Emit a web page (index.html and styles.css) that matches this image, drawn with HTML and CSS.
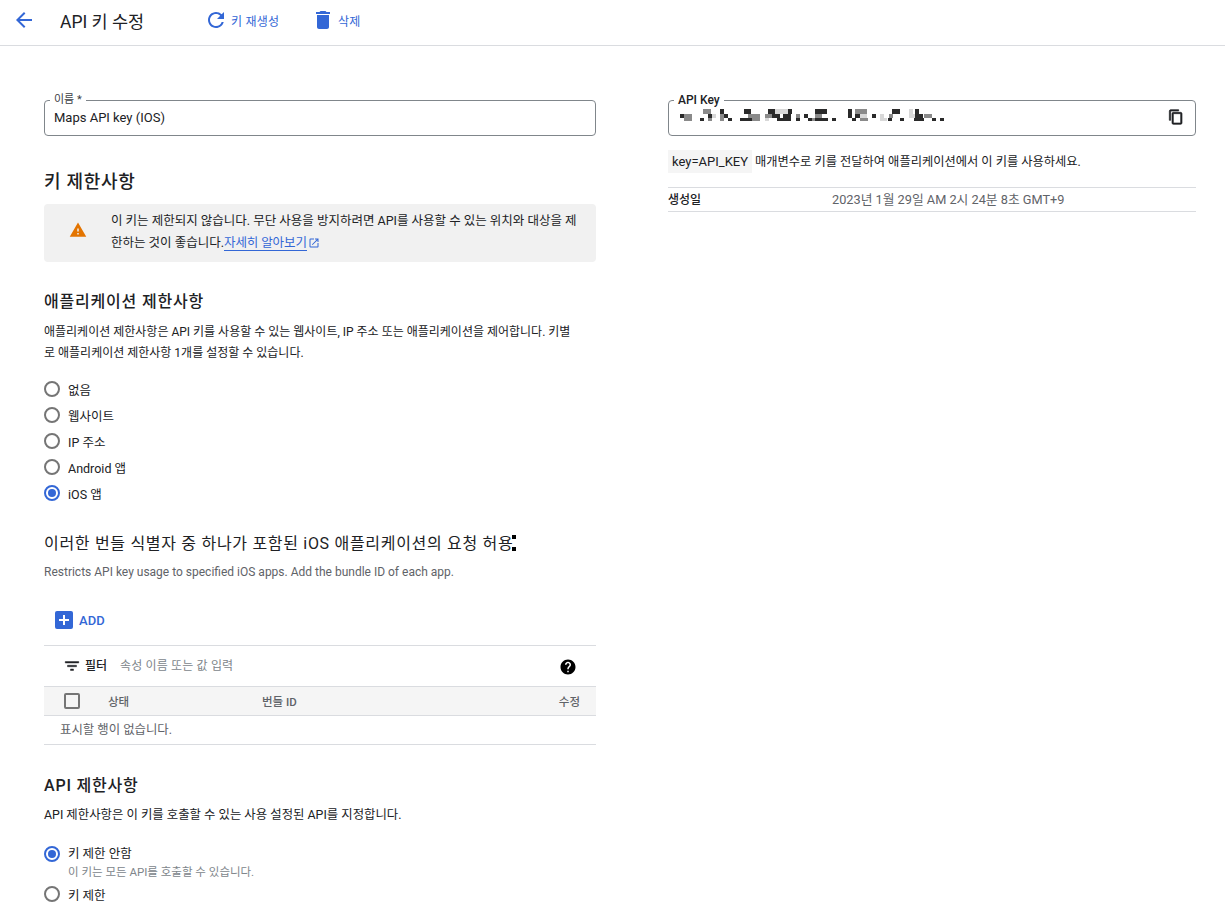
FILE: index.html
```html
<!DOCTYPE html>
<html lang="ko">
<head>
<meta charset="utf-8">
<title>API 키 수정</title>
<link rel="stylesheet" href="styles.css">
</head>
<body>
<header class="toolbar">
  <svg class="back" viewBox="0 0 24 24" width="24" height="24"><path d="M20 11H7.83l5.59-5.59L12 4l-8 8 8 8 1.41-1.41L7.83 13H20z"/></svg>
  <h1 class="page-title">API 키 수정</h1>
  <span class="tool tool-regen">
    <svg viewBox="0 0 24 24" width="24" height="24"><path d="M17.65 6.35A7.958 7.958 0 0 0 12 4c-4.42 0-7.99 3.58-7.99 8s3.57 8 7.99 8c3.73 0 6.84-2.55 7.73-6h-2.08A5.99 5.99 0 0 1 12 18c-3.31 0-6-2.69-6-6s2.69-6 6-6c1.66 0 3.14.69 4.22 1.78L13 11h7V4l-2.35 2.35z"/></svg>
    키 재생성
  </span>
  <span class="tool tool-del">
    <svg viewBox="0 0 24 24" width="24" height="24"><path d="M6 19c0 1.1.9 2 2 2h8c1.1 0 2-.9 2-2V7H6v12zM19 4h-3.5l-1-1h-5l-1 1H5v2h14V4z"/></svg>
    삭제
  </span>
</header>

<main class="columns">
  <section class="col-left">
    <div class="field">
      <span class="field-label">이름 *</span>
      <span class="field-value">Maps API key (IOS)</span>
    </div>

    <h2 class="h-key">키 제한사항</h2>
    <div class="notice">
      <svg class="warn" viewBox="0 0 24 24" width="18" height="18"><path d="M1 21h22L12 2 1 21zm12-3h-2v-2h2v2zm0-4h-2v-4h2v4z"/></svg>
      <p>이 키는 제한되지 않습니다. 무단 사용을 방지하려면 API를 사용할 수 있는 위치와 대상을 제한하는 것이 좋습니다.<a class="link">자세히 알아보기</a><svg class="ext" viewBox="0 0 24 24" width="12" height="12"><path d="M19 19H5V5h7V3H5a2 2 0 0 0-2 2v14a2 2 0 0 0 2 2h14c1.1 0 2-.9 2-2v-7h-2v7zM14 3v2h3.59l-9.83 9.83 1.41 1.41L19 6.41V10h2V3h-7z"/></svg></p>
    </div>

    <h2 class="h-app">애플리케이션 제한사항</h2>
    <p class="desc">애플리케이션 제한사항은 API 키를 사용할 수 있는 웹사이트, IP 주소 또는 애플리케이션을 제어합니다. 키별로 애플리케이션 제한사항 1개를 설정할 수 있습니다.</p>

    <ul class="radios">
      <li class="radio"><i class="dot"></i>없음</li>
      <li class="radio"><i class="dot"></i>웹사이트</li>
      <li class="radio"><i class="dot"></i>IP 주소</li>
      <li class="radio"><i class="dot"></i>Android 앱</li>
      <li class="radio"><i class="dot on"></i>iOS 앱</li>
    </ul>

    <h2 class="h-bundle"><span class="h-bundle-text">이러한 번들 식별자 중 하나가 포함된 iOS 애플리케이션의 요청 허용<i class="caret"></i></span></h2>
    <p class="hint">Restricts API key usage to specified iOS apps. Add the bundle ID of each app.</p>

    <div class="add">
      <svg viewBox="0 0 18 18" width="18" height="18"><rect width="18" height="18" rx="2" class="add-bg"/><path class="add-plus" d="M8 4h2v4h4v2h-4v4H8v-4H4V8h4z"/></svg>
      ADD
    </div>

    <div class="filter">
      <svg class="filter-ic" viewBox="0 0 24 24" width="18" height="18"><path d="M10 18h4v-2h-4v2zM3 6v2h18V6H3zm3 7h12v-2H6v2z"/></svg>
      <span class="filter-name">필터</span>
      <span class="filter-ph">속성 이름 또는 값 입력</span>
      <svg class="help" viewBox="0 0 24 24" width="18" height="18"><path d="M12 2C6.48 2 2 6.48 2 12s4.48 10 10 10 10-4.48 10-10S17.52 2 12 2zm1 17h-2v-2h2v2zm2.07-7.75-.9.92C13.45 12.9 13 13.5 13 15h-2v-.5c0-1.1.45-2.1 1.17-2.83l1.24-1.26c.37-.36.59-.86.59-1.41 0-1.1-.9-2-2-2s-2 .9-2 2H8c0-2.21 1.79-4 4-4s4 1.79 4 4c0 .88-.36 1.68-.93 2.25z"/></svg>
    </div>
    <div class="thead">
      <i class="check"></i>
      <span class="th-state">상태</span>
      <span class="th-id">번들 ID</span>
      <span class="th-edit">수정</span>
    </div>
    <div class="empty">표시할 행이 없습니다.</div>

    <h2 class="h-api">API 제한사항</h2>
    <p class="desc-api">API 제한사항은 이 키를 호출할 수 있는 사용 설정된 API를 지정합니다.</p>

    <div class="radio radio-api"><i class="dot on"></i><span>키 제한 안함<small>이 키는 모든 API를 호출할 수 있습니다.</small></span></div>
    <div class="radio radio-api2"><i class="dot"></i>키 제한</div>
  </section>

  <aside class="col-right">
    <div class="field field-key">
      <span class="field-label label-key">API Key</span>
      <svg class="mosaic" viewBox="0 0 270 12" width="270" height="12">
        <g class="m-d">
          <rect x="40" y="0" width="4" height="5"/><rect x="64" y="0" width="7" height="5"/><rect x="88" y="0" width="7" height="5"/><rect x="108" y="0" width="4" height="5"/>
          <rect x="135" y="0" width="12" height="5"/><rect x="168" y="0" width="4" height="5"/><rect x="212" y="0" width="8" height="5"/><rect x="235" y="0" width="4" height="5"/>
          <rect x="0" y="5" width="4" height="4"/><rect x="28" y="5" width="4" height="4"/><rect x="44" y="5" width="4" height="4"/><rect x="92" y="5" width="8" height="4"/><rect x="103" y="5" width="8" height="4"/><rect x="124" y="5" width="4" height="4"/>
          <rect x="168" y="5" width="4" height="4"/><rect x="175" y="5" width="5" height="4"/><rect x="192" y="5" width="4" height="4"/><rect x="235" y="5" width="8" height="4"/>
          <rect x="20" y="9" width="4" height="3"/><rect x="48" y="9" width="4" height="3"/><rect x="60" y="9" width="12" height="3"/><rect x="97" y="9" width="14" height="3"/><rect x="116" y="9" width="4" height="3"/><rect x="128" y="9" width="4" height="3"/>
          <rect x="135" y="9" width="13" height="3"/><rect x="152" y="9" width="4" height="3"/><rect x="172" y="9" width="4" height="3"/><rect x="208" y="9" width="4" height="3"/><rect x="220" y="9" width="4" height="3"/><rect x="234" y="9" width="10" height="3"/><rect x="252" y="9" width="4" height="3"/><rect x="260" y="9" width="4" height="3"/>
        </g>
        <g class="m-g">
          <rect x="23" y="0" width="8" height="5"/><rect x="175" y="0" width="12" height="5"/>
          <rect x="4" y="5" width="8" height="7"/><rect x="40" y="5" width="4" height="7"/><rect x="68" y="5" width="12" height="4"/><rect x="85" y="5" width="7" height="4"/><rect x="116" y="5" width="4" height="4"/>
          <rect x="135" y="5" width="7" height="4"/><rect x="209" y="5" width="4" height="4"/><rect x="244" y="5" width="8" height="4"/>
          <rect x="28" y="9" width="4" height="3"/><rect x="72" y="9" width="8" height="3"/><rect x="132" y="9" width="3" height="3"/><rect x="180" y="9" width="8" height="3"/>
        </g>
        <g class="m-l">
          <rect x="95" y="0" width="13" height="5"/><rect x="229" y="0" width="4" height="5"/>
          <rect x="32" y="5" width="4" height="4"/><rect x="180" y="5" width="7" height="4"/><rect x="200" y="5" width="4" height="4"/><rect x="229" y="5" width="6" height="4"/>
          <rect x="85" y="9" width="4" height="3"/><rect x="200" y="9" width="7" height="3"/>
        </g>
      </svg>
      <svg class="copy" viewBox="0 0 24 24" width="16" height="16"><path d="M16 1H4c-1.1 0-2 .9-2 2v14h2V3h12V1zm3 4H8c-1.1 0-2 .9-2 2v14c0 1.1.9 2 2 2h11c1.1 0 2-.9 2-2V7c0-1.1-.9-2-2-2zm0 16H8V7h11v14z"/></svg>
    </div>
    <p class="key-note"><code class="key-code">key=API_KEY</code> 매개변수로 키를 전달하여 애플리케이션에서 이 키를 사용하세요.</p>
    <div class="meta"><span class="meta-k">생성일</span><span class="meta-v">2023년 1월 29일 AM 2시 24분 8초 GMT+9</span></div>
  </aside>
</main>
</body>
</html>
```

FILE: styles.css
```css
* { box-sizing: border-box; }
html, body { margin: 0; padding: 0; }
body {
  font-family: Roboto, "Noto Sans CJK KR", sans-serif;
  font-size: 12px;
  color: #202124;
  background: #fff;
  height: 922px;
  overflow: hidden;
}
h1, h2, p, ul { margin: 0; padding: 0; }
i { display: block; font-style: normal; }

/* toolbar */
.toolbar {
  height: 46px;
  border-bottom: 1px solid #dadce0;
  display: flex;
  align-items: center;
  padding-bottom: 5px;
}
.back { fill: #3367d6; margin-left: 12px; }
.page-title { font-size: 17.5px; font-weight: 400; margin-left: 24px; width: 144px; white-space: nowrap; }
.tool { display: flex; align-items: center; color: #3367d6; font-size: 12px; font-weight: 400; letter-spacing: .25px; }
.tool svg { fill: #3367d6; flex: none; }
.tool-regen { width: 107px; }
.tool-regen svg { margin-right: 3px; }
.tool-del svg { margin-right: 3px; }

/* columns */
.columns { display: flex; gap: 72px; padding: 54px 0 0 44px; }
.col-left { width: 552px; flex: none; }
.col-right { width: 528px; flex: none; }

/* outlined field */
.field {
  position: relative;
  height: 36px;
  border: 1px solid #80868b;
  border-radius: 4px;
  display: flex;
  align-items: center;
  padding: 0 0 2px 9px;
  font-size: 13px;
}
.field-label {
  position: absolute;
  top: -7px;
  left: 5px;
  padding: 0 4px;
  background: #fff;
  font-size: 11px;
  line-height: 12px;
  color: #3c4043;
}
.field-value { color: #202124; }

/* headings */
.h-key { font-size: 18px; font-weight: 500; line-height: 24px; margin-top: 34px; letter-spacing: .7px; }
.h-app { font-size: 16px; font-weight: 500; line-height: 24px; margin-top: 28px; letter-spacing: .8px; }
.h-bundle { font-size: 16px; font-weight: 400; line-height: 24px; margin-top: 26px; letter-spacing: .7px; white-space: nowrap; }
.h-bundle-text { display: inline-block; position: relative; }
.caret { position: absolute; right: -3px; top: 3px; width: 4px; height: 4px; background: #000; }
.caret::after { content: ""; position: absolute; left: 0; top: 12px; width: 4px; height: 4px; background: #000; }
.h-api { font-size: 16px; font-weight: 500; line-height: 24px; margin-top: 29px; letter-spacing: .8px; }

/* notice */
.notice {
  display: flex;
  background: #f1f1f1;
  border-radius: 4px;
  height: 58px;
  margin-top: 10px;
  padding: 6px 14px 0 25px;
}
.warn { fill: #e37400; flex: none; margin-top: 11px; }
.notice p { margin-left: 24px; font-size: 12.5px; line-height: 22px; color: #202124; }
.link { color: #3367d6; border-bottom: 1px solid #3367d6; letter-spacing: -.1px; }
.ext { fill: #3367d6; vertical-align: -2px; margin-left: 1px; }

.desc { font-size: 12px; line-height: 21px; margin-top: 8px; padding-right: 20px; color: #202124; }

/* radios */
.radios { list-style: none; margin-top: 12px; }
.radio { display: flex; align-items: center; height: 26px; font-size: 12.5px; color: #202124; }
.dot {
  width: 16px;
  height: 16px;
  border: 2px solid #757575;
  border-radius: 50%;
  margin-right: 8px;
  flex: none;
}
.dot.on { border-color: #3367d6; position: relative; }
.dot.on::after {
  content: "";
  position: absolute;
  left: 2px;
  top: 2px;
  width: 8px;
  height: 8px;
  border-radius: 50%;
  background: #3367d6;
}

.hint { font-size: 12px; line-height: 16px; color: #5f6368; margin-top: 8px; }

.add { display: flex; align-items: center; margin-top: 30px; margin-left: 11px; height: 20px; font-size: 13px; font-weight: 500; color: #3367d6; letter-spacing: .1px; }
.add svg { margin-right: 6px; }
.add-bg { fill: #3367d6; }
.add-plus { fill: #fff; }

/* table */
.filter {
  display: flex;
  align-items: center;
  height: 41px;
  margin-top: 15px;
  border-top: 1px solid #dadce0;
  padding: 0 0 3px 19px;
}
.filter-ic { fill: #202124; stroke: #202124; stroke-width: .6; margin-right: 4px; margin-top: 3px; }
.filter-name { font-size: 12px; font-weight: 500; }
.filter-ph { font-size: 12px; color: #80868b; margin-left: 13px; letter-spacing: .15px; }
.help { fill: #000; margin-left: auto; margin-right: 19px; margin-top: 5px; }
.thead {
  display: flex;
  align-items: center;
  height: 30px;
  background: #f5f5f5;
  border-top: 1px solid #dadce0;
  border-bottom: 1px solid #dadce0;
  font-size: 11.5px;
  color: #5f6368;
  font-weight: 500;
  padding-left: 20px;
}
.check { width: 16px; height: 16px; border: 2px solid #757575; border-radius: 2px; flex: none; }
.th-state { margin-left: 28px; width: 154px; }
.th-edit { margin-left: auto; margin-right: 16px; }
.empty { height: 29px; line-height: 28px; padding-left: 16px; border-bottom: 1px solid #dadce0; font-size: 12.4px; color: #5f6368; }

.desc-api { font-size: 12.4px; line-height: 20px; margin-top: 7px; }
.radio-api { margin-top: 20px; align-items: flex-start; height: 36px; }
.radio-api .dot { margin-top: 1px; }
.radio-api span { line-height: 18px; }
.radio-api small { display: block; font-size: 11.5px; line-height: 18px; color: #80868b; }
.radio-api2 { margin-top: 0; height: 26px; }

/* right */
.label-key { font-weight: 500; font-size: 12px; color: #202124; }
.mosaic { flex: none; align-self: flex-start; margin: 8px 0 0 2px; }
.m-d { fill: #2a2a2a; }
.m-g { fill: #8a8a8a; }
.m-l { fill: #d8d8d8; }
.copy { fill: #202124; stroke: #202124; stroke-width: 1; margin-left: auto; margin-right: 11px; flex: none; }
.key-note { margin-top: 14px; font-size: 12.25px; line-height: 23px; }
.key-code { display: inline-block; background: #f5f5f5; padding: 0 4px; font-family: Roboto, sans-serif; font-size: 13px; }
.meta {
  display: flex;
  height: 25px;
  margin-top: 13px;
  align-items: center;
  border-top: 1px solid #dadce0;
  border-bottom: 1px solid #dadce0;
  font-size: 12.75px;
  padding-bottom: 2px;
}
.meta-k { width: 164px; font-size: 12px; font-weight: 500; }
.meta-v { color: #5f6368; }
```
